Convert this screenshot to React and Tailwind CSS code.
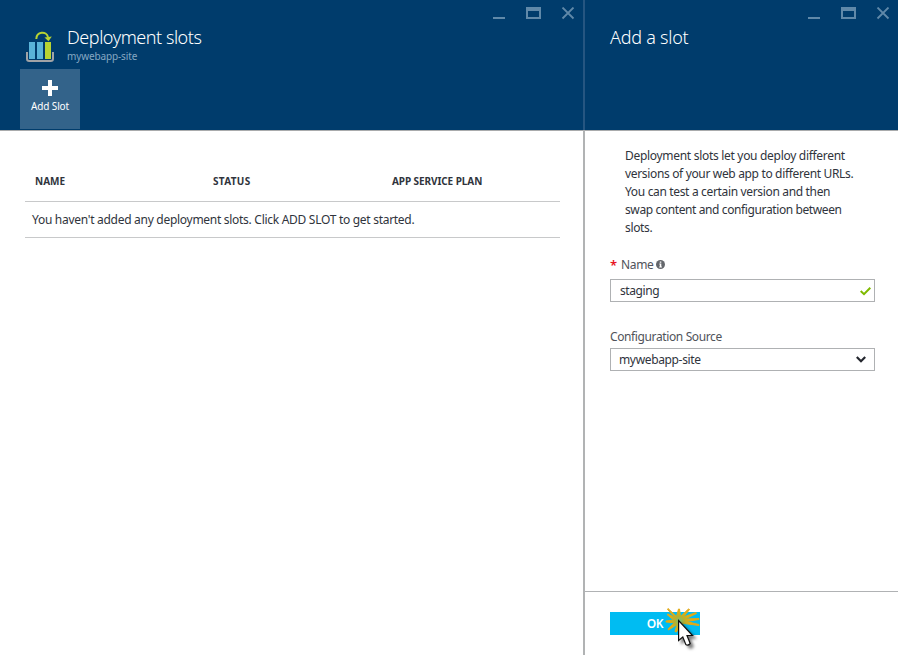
function WindowControls({ className }) {
  return (
    <div className={`flex h-[13px] items-start ${className}`}>
      <svg width="82" height="13" viewBox="0 0 82 13" shapeRendering="crispEdges">
        <rect x="0" y="10" width="12" height="2" fill="#6089a9" />
        <path fillRule="evenodd" fill="#6089a9" d="M33 0H48V12H33Z M35 4V10H46V4Z" />
        <path d="M69.5 .5L80.5 11.5M80.5 .5L69.5 11.5" stroke="#6089a9" strokeWidth="1.8" shapeRendering="auto" />
      </svg>
    </div>
  );
}

function SlotsIcon() {
  return (
    <svg width="30" height="32" viewBox="0 0 30 32" className="shrink-0">
      <path d="M2 21V27.800Q2 30 4.200 30H25.800Q28 30 28 27.800V21" fill="none" stroke="#a0a3a6" strokeWidth="2" />
      <rect x="4" y="11" width="6" height="17" fill="#59b4d9" />
      <rect x="12" y="11" width="6" height="17" fill="#59b4d9" />
      <rect x="20" y="11" width="6" height="17" fill="#b8d432" />
      <path d="M11.300 8C11.500 .4 21.500 -.2 23 6" fill="none" stroke="#b8d432" strokeWidth="2" />
      <path d="M19.500 6.500L26.800 5.500L23.500 10.300Z" fill="#b8d432" />
    </svg>
  );
}

function ClickCursor() {
  return (
    <svg width="48" height="48" viewBox="0 0 48 48" className="absolute left-[54px] top-[-7px]">
      <defs>
        <radialGradient id="burst" gradientUnits="userSpaceOnUse" cx="15.500" cy="16" r="14">
          <stop offset="0" stopColor="#72c080" />
          <stop offset=".35" stopColor="#b9b02c" />
          <stop offset=".7" stopColor="#e0ac14" />
          <stop offset="1" stopColor="#e0a816" />
        </radialGradient>
        <filter id="shadow" x="-50%" y="-50%" width="220%" height="220%">
          <feDropShadow dx="3" dy="3" stdDeviation="1.800" floodColor="#000" floodOpacity=".5" />
        </filter>
      </defs>
      <path
        fill="url(#burst)"
        stroke="url(#burst)"
        strokeWidth="1"
        strokeLinejoin="round"
        d="M4 3.500L12.500 11.500L14.500 4H15.500L16.500 11.500L24.500 4L25.500 4.500L19.500 12L32 7.500L32.500 8.500L21 14L35 13.500V14.500L22 16.500L35 19.500V20.500L20 18.500L16 20L12.500 27L11 26.500L13 19.500L4.500 25L4 24L10.500 17.800L2 17V16L9.500 15L3 9.500L4 9L11.500 13L3.500 4.500Z"
      />
      <path
        d="M14.600 15.500V35.500L18.800 32L21.800 39.500Q24 41.200 26.200 38.500L23 30.500H28.500Z"
        fill="#fff"
        stroke="#111"
        strokeWidth="1.200"
        filter="url(#shadow)"
      />
    </svg>
  );
}

export default function App() {
  return (
    <div className="flex h-[655px] w-[898px] overflow-hidden bg-white font-['Noto_Sans','Open_Sans',sans-serif] text-[12px] text-[#30343c]">
      <section className="flex w-[583px] flex-col">
        <header className="flex h-[131px] flex-col border-b border-[#a9abac] bg-[#003c6c]">
          <WindowControls className="mt-[7px] ml-[493px]" />
          <div className="mt-[11px] ml-[25px] flex h-[38px]">
            <SlotsIcon />
            <div className="ml-3 whitespace-nowrap">
              <h1 className="mt-[-6px] h-6 text-[18px] leading-6 font-light tracking-[-0.46px] text-white">Deployment slots</h1>
              <p className="text-[10px] leading-[14px] tracking-[-0.13px] text-[#86a8c3]">mywebapp-site</p>
            </div>
          </div>
          <button className="ml-5 flex h-[60px] w-[60px] flex-col items-center bg-[#33638a] text-white">
            <svg width="16" height="16" viewBox="0 0 16 16" className="mt-[11px]">
              <path fill="#fff" d="M6 0H10V6H16V10H10V16H6V10H0V6H6Z" />
            </svg>
            <span className="mt-[3px] text-[10px] leading-[14px] tracking-[-0.13px] whitespace-nowrap">Add Slot</span>
          </button>
        </header>
        <div className="mt-[31px] ml-[25px] w-[535px]">
          <div className="grid h-10 grid-cols-[178px_179px_1fr] border-b border-[#c8c9ca] pl-[10px] text-[10px] leading-[38px] font-bold">
            <span>NAME</span>
            <span className="tracking-[0.3px]">STATUS</span>
            <span className="tracking-[-0.08px]">APP SERVICE PLAN</span>
          </div>
          <div className="h-9 border-b border-[#c8c9ca] pl-[7px] leading-[35px] whitespace-nowrap">
            <span className="tracking-[-0.285px]">You haven't added any deployment slots. Click ADD SLOT to get started.</span>
          </div>
        </div>
      </section>

      <div className="flex w-[2px] flex-col">
        <div className="h-[130px] bg-[#265681]" />
        <div className="flex-1 bg-[#b1b3b4]" />
      </div>

      <section className="flex w-[313px] flex-col">
        <header className="h-[131px] border-b border-[#a9abac] bg-[#003c6c]">
          <WindowControls className="mt-[7px] ml-[223px]" />
          <h2 className="mt-[5px] ml-[25px] text-[18px] leading-6 font-light tracking-[-0.25px] text-white">Add a slot</h2>
        </header>
        <div className="flex flex-1 flex-col pr-[23px] pl-[25px]">
          <p className="mt-4 ml-[15px] leading-[18px] tracking-[-0.34px] whitespace-nowrap">
            <span className="tracking-[-0.3px]">Deployment slots let you deploy different</span>
            <br />
            versions of your web app to different URLs.
            <br />
            You can test a certain version and then
            <br />
            <span className="tracking-[-0.39px]">swap content and configuration between</span>
            <br />
            slots.
          </p>
          <div className="mt-[19px] flex h-[18px] items-center text-[#50535a]">
            <span className="w-[11px] text-[13px] leading-[18px] font-semibold text-[#e81123]">*</span>
            <span className="tracking-[-0.35px]">Name</span>
            <svg width="9" height="9" viewBox="0 0 9 9" className="mb-[2px] ml-[3px]">
              <circle cx="4.500" cy="4.500" r="4.500" fill="#64676c" />
              <path fill="#fff" d="M3.800 1.400H5.300V2.700H3.800ZM3.300 3.600H5.300V6.500H5.900V7.400H3.200V6.500H3.800V4.400H3.300Z" />
            </svg>
          </div>
          <div className="mt-[5px] flex h-[23px] items-center justify-between border border-[#afb1b3] pr-[3px] pl-[9px]">
            <span className="tracking-[-0.4px]">staging</span>
            <svg width="11" height="9" viewBox="0 0 11 9" className="mt-[2px]">
              <path d="M.7 4L4 7.200L10.300 .8" fill="none" stroke="#7fba00" strokeWidth="2" />
            </svg>
          </div>
          <label className="mt-[26px] h-[18px] leading-[18px] tracking-[-0.38px] text-[#50535a]">Configuration Source</label>
          <div className="mt-[2px] flex h-[23px] items-center justify-between border border-[#afb1b3] pr-2 pl-2">
            <span className="tracking-[-0.35px]">mywebapp-site</span>
            <svg width="10" height="7" viewBox="0 0 10 7">
              <path d="M.8 1L5 5.200L9.200 1" fill="none" stroke="#24272e" strokeWidth="2.200" />
            </svg>
          </div>
        </div>
        <footer className="h-[64px] border-t border-[#b0b2b4] pt-5 pl-[25px]">
          <button className="relative block h-[23px] w-[90px] bg-[#00bcf2] text-[12px] leading-[23px] font-semibold tracking-[-0.3px] text-white">
            OK
            <ClickCursor />
          </button>
        </footer>
      </section>
    </div>
  );
}
